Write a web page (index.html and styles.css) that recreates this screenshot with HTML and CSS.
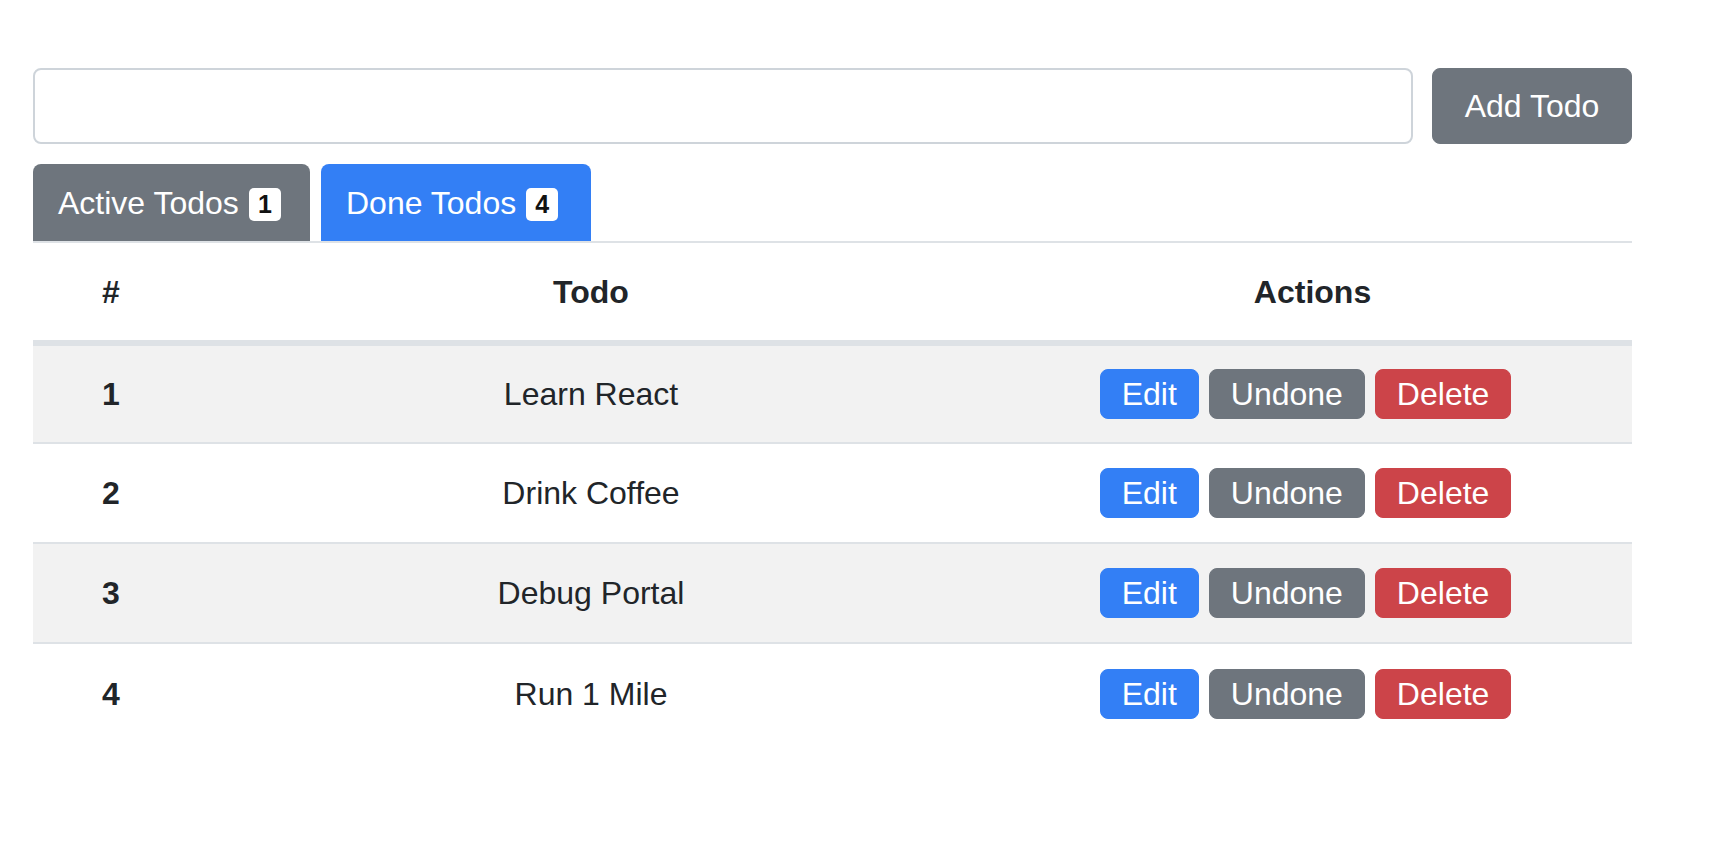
FILE: index.html
```html
<!DOCTYPE html>
<html lang="en">
<head>
<meta charset="utf-8">
<title>Todos</title>
<link rel="stylesheet" href="styles.css">
</head>
<body>
<div class="page">
  <form class="add-form">
    <input class="add-input" type="text">
    <button class="btn btn-secondary btn-add" type="button">Add Todo</button>
  </form>
  <div class="tabs">
    <div class="tab tab-active">Active Todos <span class="badge">1</span></div>
    <div class="tab tab-done">Done Todos <span class="badge">4</span></div>
  </div>
  <table class="todos">
    <colgroup>
      <col class="col-num">
      <col class="col-todo">
      <col class="col-actions">
    </colgroup>
    <thead>
      <tr><th>#</th><th>Todo</th><th>Actions</th></tr>
    </thead>
    <tbody>
      <tr>
        <th>1</th><td>Learn React</td>
        <td><div class="actions"><button class="btn btn-primary">Edit</button><button class="btn btn-secondary">Undone</button><button class="btn btn-danger">Delete</button></div></td>
      </tr>
      <tr>
        <th>2</th><td>Drink Coffee</td>
        <td><div class="actions"><button class="btn btn-primary">Edit</button><button class="btn btn-secondary">Undone</button><button class="btn btn-danger">Delete</button></div></td>
      </tr>
      <tr>
        <th>3</th><td>Debug Portal</td>
        <td><div class="actions"><button class="btn btn-primary">Edit</button><button class="btn btn-secondary">Undone</button><button class="btn btn-danger">Delete</button></div></td>
      </tr>
      <tr>
        <th>4</th><td>Run 1 Mile</td>
        <td><div class="actions"><button class="btn btn-primary">Edit</button><button class="btn btn-secondary">Undone</button><button class="btn btn-danger">Delete</button></div></td>
      </tr>
    </tbody>
  </table>
</div>
</body>
</html>
```
FILE: styles.css
```css
* { box-sizing: border-box; }
html, body { margin: 0; padding: 0; background: #fff; }
body {
  font-family: "Liberation Sans", Arial, sans-serif;
  font-size: 32px;
  line-height: 48px;
  color: #212529;
}
.page {
  width: 1599px;
  margin-left: 33px;
  padding-top: 68px;
}
.add-form {
  display: flex;
  gap: 19px;
  margin: 0;
}
.add-input {
  flex: 1;
  height: 76px;
  border: 2px solid #ced4da;
  border-radius: 8px;
  background: #fff;
  font: inherit;
  padding: 0 24px;
  outline: none;
}
.btn {
  font-family: inherit;
  font-size: 32px;
  line-height: 48px;
  border: 1px solid transparent;
  border-radius: 8px;
  color: #fff;
  padding: 0 21px;
  cursor: pointer;
}
.btn-add {
  width: 200px;
  height: 76px;
  padding: 0;
}
.btn-primary { background: #337ff5; border-color: #337ff5; }
.btn-secondary { background: #6e757d; border-color: #6e757d; }
.btn-danger { background: #cc4449; border-color: #cc4449; }

.tabs {
  display: flex;
  gap: 11px;
  margin-top: 20px;
  border-bottom: 2px solid #dee2e6;
}
.tab {
  height: 77px;
  display: flex;
  align-items: center;
  gap: 10px;
  padding: 0 25px;
  color: #fff;
  border-radius: 8px 8px 0 0;
}
.tab-active { background: #6e757d; width: 277px; }
.tab-done { background: #337ff5; width: 270px; }
.badge {
  display: inline-flex;
  align-items: center;
  justify-content: center;
  width: 32px;
  height: 33px;
  margin-top: 4px;
  background: #fff;
  color: #111;
  font-weight: bold;
  font-size: 25px;
  line-height: 33px;
  border-radius: 5px;
}

.todos {
  width: 1599px;
  border-collapse: collapse;
  table-layout: fixed;
}
.col-num { width: 156px; }
.col-todo { width: 804px; }
.col-actions { width: 639px; }
.todos th, .todos td {
  text-align: center;
  vertical-align: middle;
  padding: 0;
}
.todos thead th {
  height: 100px;
  border-bottom: 6px solid #dee2e6;
  font-weight: bold;
}
.todos tbody tr { height: 100px; }
.todos tbody tr + tr td, .todos tbody tr + tr th { border-top: 2px solid #dee2e6; }
.todos tbody tr:nth-child(odd) { background: #f2f2f2; }
.todos tbody th { font-weight: bold; }
.actions {
  display: flex;
  justify-content: center;
  gap: 10px;
  padding-right: 14px;
}
.actions .btn { height: 50px; }
```
